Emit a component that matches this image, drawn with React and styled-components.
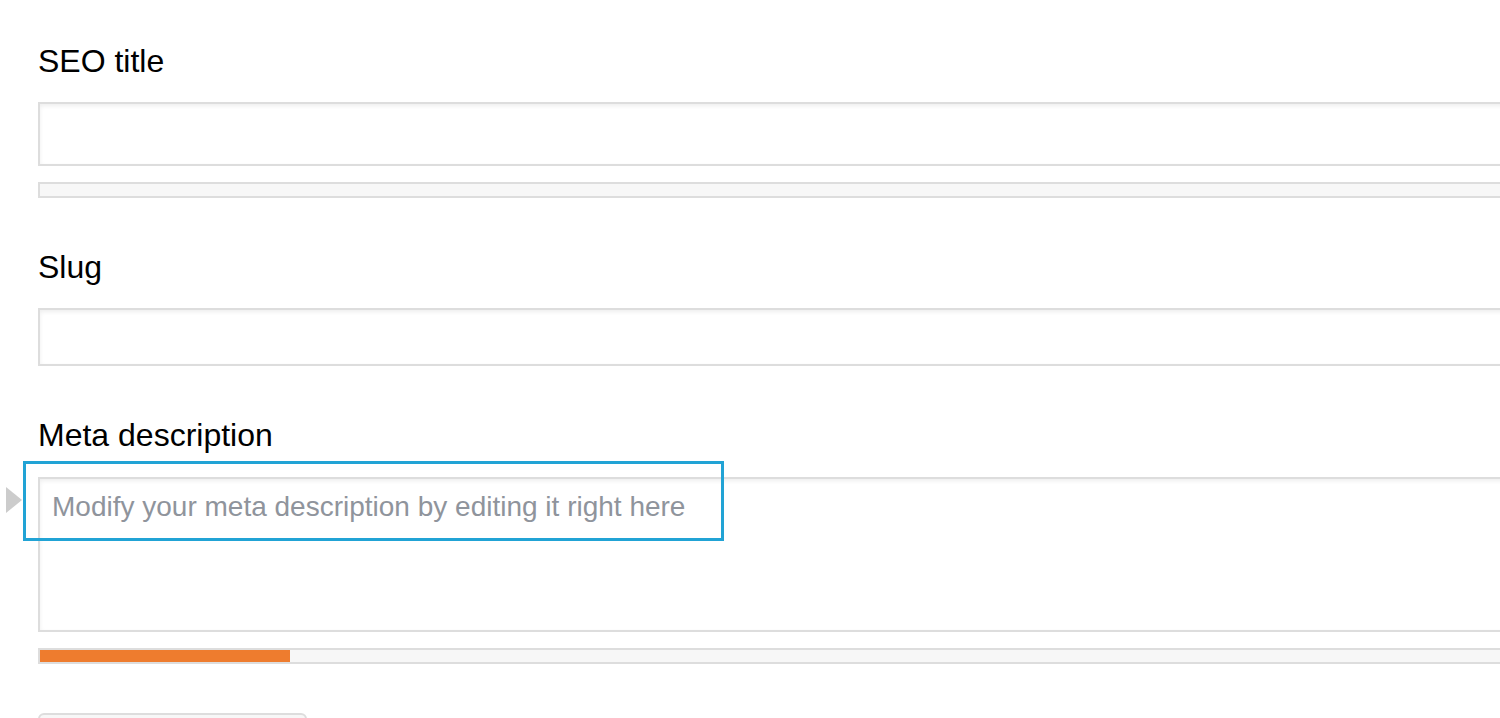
import React from "react";
import styled, { createGlobalStyle } from "styled-components";

const GlobalStyle = createGlobalStyle`
  html, body {
    margin: 0;
    padding: 0;
    background: #ffffff;
    overflow: hidden;
  }
  body {
    font-family: "Liberation Sans", Arial, sans-serif;
    color: #000;
  }
`;

const Page = styled.div`
  padding: 43px 0 0 38px;
  height: 718px;
  box-sizing: border-box;
  overflow: hidden;
`;

const Form = styled.div`
  width: 1540px;
  display: flex;
  flex-direction: column;
`;

const Field = styled.div`
  display: flex;
  flex-direction: column;
  margin-bottom: ${(p) => p.$spacing}px;
`;

const Label = styled.label`
  font-size: 32px;
  line-height: 36px;
  height: 36px;
  margin-bottom: ${(p) => p.$gap}px;
`;

const Input = styled.input`
  box-sizing: border-box;
  width: 100%;
  height: ${(p) => p.$h}px;
  border: 2px solid #dddddd;
  border-right: none;
  border-radius: 0;
  background: #fff;
  box-shadow: inset 0 2px 4px rgba(0, 0, 0, 0.07);
  outline: none;
  margin: 0;
  padding: 0 12px;
  font-family: inherit;
  font-size: 28px;
`;

const TextWrap = styled.div`
  position: relative;
`;

const TextArea = styled.textarea`
  display: block;
  box-sizing: border-box;
  width: 100%;
  height: 155px;
  border: 2px solid #dddddd;
  border-right: none;
  border-radius: 0;
  background: #fff;
  box-shadow: inset 0 2px 4px rgba(0, 0, 0, 0.07);
  outline: none;
  resize: none;
  margin: 0;
  padding: 12px 12px;
  font-family: "Liberation Sans", Arial, sans-serif;
  font-size: 28px;
  line-height: 32px;
  &::placeholder {
    color: #8f949c;
    opacity: 1;
  }
`;

const Highlight = styled.div`
  position: absolute;
  left: -15px;
  top: -16px;
  width: 701px;
  height: 80px;
  box-sizing: border-box;
  border: 3px solid #21a3d5;
  pointer-events: none;
`;

const Pointer = styled.div`
  position: absolute;
  left: -32px;
  top: 10px;
  width: 0;
  height: 0;
  border-left: 16px solid #cccccc;
  border-top: 13px solid transparent;
  border-bottom: 13px solid transparent;
`;

const Bar = styled.div`
  box-sizing: border-box;
  margin-top: 16px;
  height: 16px;
  border: 2px solid #dddddd;
  border-right: none;
  background: #f7f7f7;
  display: flex;
`;

const BarFill = styled.div`
  height: 100%;
  background: #ee7c2e;
`;

const Button = styled.button`
  box-sizing: border-box;
  width: 269px;
  height: 60px;
  border: 2px solid #dddddd;
  border-radius: 6px;
  background: #f7f7f7;
  padding: 0;
  margin: 0;
`;

export default function App() {
  return (
    <>
      <GlobalStyle />
      <Page>
        <Form>
          <Field $spacing={51}>
            <Label $gap={23}>SEO title</Label>
            <Input $h={64} />
            <Bar />
          </Field>
          <Field $spacing={51}>
            <Label $gap={23}>Slug</Label>
            <Input $h={58} />
          </Field>
          <Field $spacing={49}>
            <Label $gap={24}>Meta description</Label>
            <TextWrap>
              <TextArea placeholder="Modify your meta description by editing it right here" />
              <Highlight />
              <Pointer />
            </TextWrap>
            <Bar>
              <BarFill style={{ width: "250px" }} />
            </Bar>
          </Field>
          <div>
            <Button aria-label="Edit snippet" />
          </div>
        </Form>
      </Page>
    </>
  );
}
